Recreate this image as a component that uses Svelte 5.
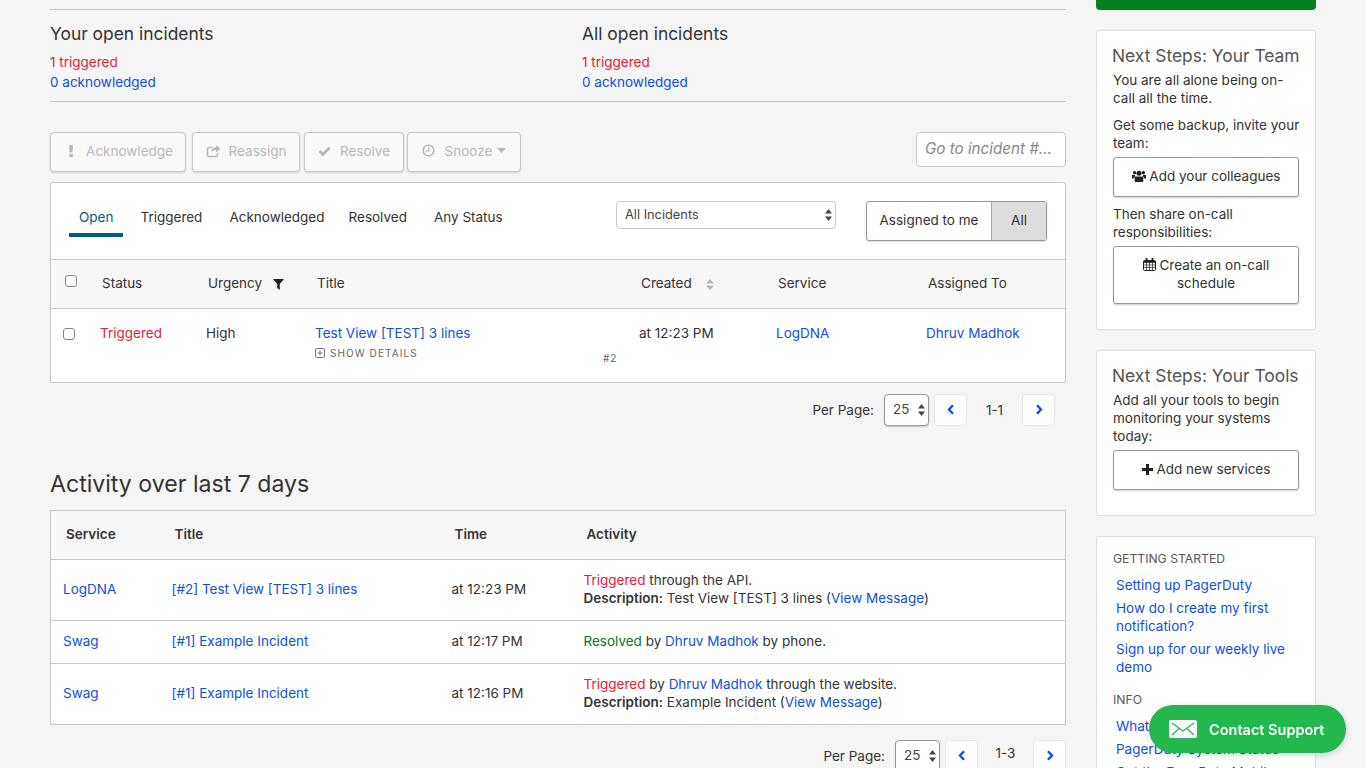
<script>
    const tabs = ["Open", "Triggered", "Acknowledged", "Resolved", "Any Status"];
</script>

<div class="page">
    <main class="content">
        <section class="summary">
            <div class="summary-col">
                <h3>Your open incidents</h3>
                <div class="red">1 triggered</div>
                <div class="blue">0 acknowledged</div>
            </div>
            <div class="summary-col">
                <h3>All open incidents</h3>
                <div class="red">1 triggered</div>
                <div class="blue">0 acknowledged</div>
            </div>
        </section>

        <div class="toolbar">
            <button class="act ack">
                <svg width="8" height="14" viewBox="0 0 8 14"><path d="M2 1h4L5.400 8.500H2.600zM2.200 10h3.600v3H2.200z" fill="currentColor" /></svg>
                <span>Acknowledge</span>
            </button>
            <button class="act re">
                <svg width="15" height="14" viewBox="0 0 15 14"><path d="M10 1l4.500 3.800L10 8.600V6.300C7.500 6.300 5.800 7 4.800 9 4.900 5.600 7 3.500 10 3.300z" fill="currentColor" /><path d="M11.500 9v2.500a1 1 0 0 1-1 1H2.500a1 1 0 0 1-1-1V4.500a1 1 0 0 1 1-1H6" fill="none" stroke="currentColor" stroke-width="1.500" /></svg>
                <span>Reassign</span>
            </button>
            <button class="act res">
                <svg width="13" height="12" viewBox="0 0 13 12"><path d="M1.500 6l3.400 3.400L11.500 2.800" fill="none" stroke="currentColor" stroke-width="2.800" /></svg>
                <span>Resolve</span>
            </button>
            <button class="act sn">
                <svg width="13" height="13" viewBox="0 0 13 13"><circle cx="6.500" cy="6.500" r="5.300" fill="none" stroke="currentColor" stroke-width="1.500" /><path d="M6.800 3.200v3.600H4" fill="none" stroke="currentColor" stroke-width="1.300" /></svg>
                <span>Snooze</span>
                <svg class="caret" width="9" height="5" viewBox="0 0 9 5"><path d="M0 0h9L4.500 5z" fill="currentColor" /></svg>
            </button>
            <input class="goto" type="text" placeholder="Go to incident #..." />
        </div>

        <section class="panel">
            <div class="filters">
                <nav class="tabs">
                    {#each tabs as tab, i}
                        <span class="tab" class:active={i === 0}>{tab}</span>
                    {/each}
                </nav>
                <div class="select-wrap wide">
                    <select class="select"><option>All Incidents</option></select>
                    <svg class="updown" width="7" height="12" viewBox="0 0 7 12"><path d="M3.500 0L7 4.500H0zM3.500 12L0 7.500h7z" fill="#444" /></svg>
                </div>
                <div class="toggle">
                    <span class="toggle-a">Assigned to me</span>
                    <span class="toggle-b">All</span>
                </div>
            </div>
            <table class="incidents">
                <colgroup>
                    <col style="width:36px" /><col style="width:106px" /><col style="width:109px" /><col style="width:288px" />
                    <col style="width:36px" /><col style="width:137px" /><col style="width:150px" /><col />
                </colgroup>
                <thead>
                    <tr>
                        <th class="check-h"><input class="check" type="checkbox" /></th>
                        <th>Status</th>
                        <th>Urgency
                            <svg class="filter" width="11" height="11" viewBox="0 0 11 11"><path d="M0 0h11L6.800 5v6L4.200 9V5z" fill="#222" /></svg>
                        </th>
                        <th colspan="2">Title</th>
                        <th>Created
                            <svg class="sort" width="8" height="11" viewBox="0 0 8 11"><path d="M4 0l4 4.500H0zM4 11L0 6.500h8z" fill="#b5b5b5" /></svg>
                        </th>
                        <th>Service</th>
                        <th>Assigned To</th>
                    </tr>
                </thead>
                <tbody>
                    <tr>
                        <td class="check-c"><input class="check" type="checkbox" /></td>
                        <td class="red">Triggered</td>
                        <td>High</td>
                        <td>
                            <div class="blue">Test View [TEST] 3 lines</div>
                            <div class="details">
                                <svg width="10" height="10" viewBox="0 0 10 10"><rect x="0.500" y="0.500" width="9" height="9" rx="1.500" fill="none" stroke="#777" /><path d="M5 2.500v5M2.500 5h5" stroke="#777" /></svg>
                                SHOW DETAILS
                            </div>
                        </td>
                        <td class="num">#2</td>
                        <td>at 12:23 PM</td>
                        <td class="blue">LogDNA</td>
                        <td class="blue">Dhruv Madhok</td>
                    </tr>
                </tbody>
            </table>
        </section>

        <div class="pager">
            <span class="per">Per Page:</span>
            <div class="select-wrap">
                <select class="select small"><option>25</option></select>
                <svg class="updown" width="7" height="12" viewBox="0 0 7 12"><path d="M3.500 0L7 4.500H0zM3.500 12L0 7.500h7z" fill="#444" /></svg>
            </div>
            <button class="page-btn"><svg width="8" height="11" viewBox="0 0 8 11"><path d="M6 1.200L2 5.500l4 4.300" fill="none" stroke="#0f4fe0" stroke-width="2.400" /></svg></button>
            <span class="range">1-1</span>
            <button class="page-btn"><svg width="8" height="11" viewBox="0 0 8 11"><path d="M2 1.200l4 4.300-4 4.300" fill="none" stroke="#0f4fe0" stroke-width="2.400" /></svg></button>
        </div>

        <h2 class="activity-title">Activity over last 7 days</h2>

        <table class="activity">
            <colgroup>
                <col style="width:109px" /><col style="width:280px" /><col style="width:132px" /><col />
            </colgroup>
            <thead>
                <tr><th>Service</th><th>Title</th><th>Time</th><th>Activity</th></tr>
            </thead>
            <tbody>
                <tr class="tall">
                    <td class="blue">LogDNA</td>
                    <td class="blue">[#2] Test View [TEST] 3 lines</td>
                    <td>at 12:23 PM</td>
                    <td><span class="red">Triggered</span> through the API.<br /><b>Description:</b> Test View [TEST] 3 lines (<span class="blue">View Message</span>)</td>
                </tr>
                <tr class="short">
                    <td class="blue">Swag</td>
                    <td class="blue">[#1] Example Incident</td>
                    <td>at 12:17 PM</td>
                    <td><span class="green">Resolved</span> by <span class="blue">Dhruv Madhok</span> by phone.</td>
                </tr>
                <tr class="tall">
                    <td class="blue">Swag</td>
                    <td class="blue">[#1] Example Incident</td>
                    <td>at 12:16 PM</td>
                    <td><span class="red">Triggered</span> by <span class="blue">Dhruv Madhok</span> through the website.<br /><b>Description:</b> Example Incident (<span class="blue">View Message</span>)</td>
                </tr>
            </tbody>
        </table>

        <div class="pager second">
            <span class="per">Per Page:</span>
            <div class="select-wrap">
                <select class="select small"><option>25</option></select>
                <svg class="updown" width="7" height="12" viewBox="0 0 7 12"><path d="M3.500 0L7 4.500H0zM3.500 12L0 7.500h7z" fill="#444" /></svg>
            </div>
            <button class="page-btn"><svg width="8" height="11" viewBox="0 0 8 11"><path d="M6 1.200L2 5.500l4 4.300" fill="none" stroke="#0f4fe0" stroke-width="2.400" /></svg></button>
            <span class="range">1-3</span>
            <button class="page-btn"><svg width="8" height="11" viewBox="0 0 8 11"><path d="M2 1.200l4 4.300-4 4.300" fill="none" stroke="#0f4fe0" stroke-width="2.400" /></svg></button>
        </div>
    </main>

    <aside class="sidebar">
        <div class="green-btn"></div>

        <div class="card">
            <h4>Next Steps: Your Team</h4>
            <p>You are all alone being on-call all the time.</p>
            <p class="gap">Get some backup, invite your team:</p>
            <button class="side-btn">
                <svg width="14" height="12" viewBox="0 0 14 12"><circle cx="7" cy="3.200" r="2.500" fill="#222" /><circle cx="2.600" cy="2.700" r="1.700" fill="#222" /><circle cx="11.400" cy="2.700" r="1.700" fill="#222" /><path d="M3.500 6.500h7l.8 1V11a1 1 0 0 1-1 1H3.700a1 1 0 0 1-1-1V7.500zM0 5h2.800l.4 1-1.500 2.500H0zM14 5h-2.800l-.4 1 1.500 2.500H14z" fill="#222" /></svg>
                Add your colleagues
            </button>
            <p class="gap2">Then share on-call responsibilities:</p>
            <button class="side-btn">
                <svg width="13" height="13" viewBox="0 0 13 13"><path d="M1.500 2.500h10a1 1 0 0 1 1 1v8a1 1 0 0 1-1 1h-10a1 1 0 0 1-1-1v-8a1 1 0 0 1 1-1z" fill="none" stroke="#222" /><path d="M.5 4.500h12M.5 7h12M.5 9.500h12M3.500 4.500v8M6.500 4.500v8M9.500 4.500v8" stroke="#222" stroke-width="0.700" /><path d="M3.500 0v3M9.500 0v3" stroke="#222" stroke-width="1.800" /><path d="M.5 3h12v1.500H.5z" fill="#222" /></svg>
                Create an on-call schedule
            </button>
        </div>

        <div class="card tools">
            <h4>Next Steps: Your Tools</h4>
            <p>Add all your tools to begin monitoring your systems today:</p>
            <button class="side-btn">
                <svg width="11" height="11" viewBox="0 0 11 11"><path d="M5.500 0v11M0 5.500h11" stroke="#222" stroke-width="3" /></svg>
                Add new services
            </button>
        </div>

        <div class="card help">
            <h5>GETTING STARTED</h5>
            <div class="link">Setting up PagerDuty</div>
            <div class="link">How do I create my first notification?</div>
            <div class="link">Sign up for our weekly live demo</div>
            <h5 class="info">INFO</h5>
            <div class="link">What's New</div>
            <div class="link">PagerDuty System Status</div>
            <div class="link">Get the Free Data Mobile</div>
        </div>
    </aside>
</div>

<button class="contact">
    <svg width="28" height="18" viewBox="0 0 28 18"><rect width="28" height="18" rx="2" fill="#fff" /><path d="M3 3l11 8 11-8M3 15l7-6.500M25 15l-7-6.500" fill="none" stroke="#22b84d" stroke-width="1.200" /></svg>
    Contact Support
</button>

<style>
    :global(html), :global(body) {
        margin: 0;
        height: 768px;
        overflow: hidden;
        background: #f5f5f5;
    }

    .page {
        display: flex;
        align-items: flex-start;
        height: 768px;
        overflow: hidden;
        padding-left: 50px;
        gap: 30px;
        font-family: Inter, "Liberation Sans", sans-serif;
        font-size: 13.5px;
        line-height: 18px;
        color: #333;
    }

    .content {
        width: 1016px;
        flex: none;
        padding-top: 9px;
    }

    .summary {
        display: flex;
        height: 91px;
        border-top: 1px solid #c8c8c8;
        border-bottom: 1px solid #c8c8c8;
    }

    .summary-col {
        width: 532px;
        flex: none;
        line-height: 20px;
    }

    h3 {
        margin: 12px 0 6px;
        font-size: 17.4px;
        line-height: 24px;
        font-weight: 400;
    }

    .red { color: #e3213a; }
    .blue { color: #0f4fe0; }
    .green { color: #05761f; }

    .toolbar {
        display: flex;
        gap: 6px;
        margin-top: 30px;
        height: 40px;
    }

    .act {
        display: flex;
        align-items: center;
        justify-content: center;
        gap: 9px;
        height: 40px;
        padding: 0 0 3px;
        background: #f9f9f9;
        border: 1px solid #c8c8c8;
        border-radius: 4px;
        box-shadow: 0 1px 2px rgba(0, 0, 0, 0.15);
        font: inherit;
        color: #b8b8b8;
    }

    .ack { width: 136px; gap: 11px; padding-left: 4px; }
    .re { width: 108px; gap: 8px; }
    .res { width: 100px; margin-left: -2px; }
    .sn { width: 114px; margin-left: -3px; gap: 10px; }
    .caret { margin-left: -5px; }

    .goto {
        width: 150px;
        height: 35px;
        box-sizing: border-box;
        margin-left: auto;
        padding: 0 8px 3px;
        border: 1px solid #c8c8c8;
        border-radius: 4px;
        background: #fff;
        font: italic 15.2px Inter, "Liberation Sans", sans-serif;
    }

    .goto::placeholder { color: #888; opacity: 1; }

    .panel {
        margin-top: 10px;
        background: #fff;
        border: 1px solid #c8c8c8;
        border-radius: 3px 3px 0 0;
    }

    .filters {
        display: flex;
        height: 76px;
        position: relative;
        border-bottom: 1px solid #c8c8c8;
    }

    .tabs {
        display: flex;
        padding: 15px 0 0 18px;
        width: 565px;
        flex: none;
        box-sizing: border-box;
    }

    .tab {
        padding: 10px 10px 0;
        margin-right: 7px;
        height: 26px;
    }

    .tab:nth-child(3) { margin-right: 4px; }

    .tab.active {
        color: #005c85;
        border-bottom: 4px solid #005c85;
        height: 25px;
    }

    .select-wrap {
        position: relative;
        display: inline-block;
    }

    .select-wrap.wide {
        margin-top: 18px;
        height: 27px;
    }

    .select {
        appearance: none;
        display: block;
        width: 220px;
        height: 28px;
        padding: 0 8px 2px;
        background: #fff;
        border: 1px solid #c8c8c8;
        border-radius: 4px;
        font: 12.8px Inter, "Liberation Sans", sans-serif;
        color: #444;
    }

    .select.small {
        width: 45px;
        height: 32px;
        border-color: #999;
        box-shadow: 0 1px 2px rgba(0, 0, 0, 0.2);
        font-size: 13.5px;
    }

    .updown {
        position: absolute;
        right: 4px;
        top: 8px;
        pointer-events: none;
    }

    .toggle {
        display: flex;
        height: 40px;
        margin: 18px 0 0 30px;
        box-sizing: border-box;
        border: 1px solid #999;
        border-radius: 3px;
        box-shadow: 0 1px 2px rgba(0, 0, 0, 0.15);
        line-height: 37px;
    }

    .toggle-a { width: 124px; text-align: center; }
    .toggle-b { width: 54px; text-align: center; background: #ddd; border-left: 1px solid #aaa; }

    table {
        width: 100%;
        table-layout: fixed;
        border-collapse: collapse;
    }

    th {
        text-align: left;
        font-weight: 400;
        padding: 0 0 2px 15px;
    }

    .incidents thead tr {
        height: 48px;
        background: #f7f7f7;
        border-bottom: 1px solid #c8c8c8;
    }

    .incidents td {
        height: 74px;
        padding: 15px 0 0 13px;
        vertical-align: top;
        box-sizing: border-box;
    }

    .check {
        appearance: none;
        display: block;
        width: 12px;
        height: 12px;
        margin: 0;
        background: #fff;
        border: 1px solid #888;
        border-radius: 3px;
    }

    .incidents .check-h { padding-left: 14px; padding-bottom: 6px; }
    .incidents .check-c { padding: 19px 0 0 12px; }

    .filter { margin-left: 7px; vertical-align: -2px; }
    .sort { margin-left: 10px; vertical-align: -2px; }

    .details {
        margin-top: 4px;
        font-size: 10px;
        line-height: 14px;
        letter-spacing: 1.100px;
        color: #666;
    }

    .details svg { vertical-align: -1px; margin-right: 1px; }

    .incidents td.num {
        padding-top: 40px;
        font-size: 10px;
        letter-spacing: 1px;
        color: #666;
    }

    .pager {
        display: flex;
        align-items: center;
        justify-content: flex-end;
        margin-top: 10px;
        height: 33px;
        padding-right: 11px;
    }

    .pager .select-wrap { margin-left: 10px; height: 32px; }

    .pager .updown { top: 10px; }

    .page-btn {
        display: flex;
        align-items: center;
        justify-content: center;
        width: 33px;
        height: 32px;
        margin-left: 5px;
        padding: 0;
        background: #fff;
        border: 1px solid #e4e4e4;
        border-radius: 4px;
    }

    .range {
        width: 55px;
        margin-right: -5px;
        text-align: center;
    }

    .second .range { padding-bottom: 5px; }

    .activity-title {
        margin: 43px 0 11px;
        font-size: 23.1px;
        line-height: 30px;
        font-weight: 400;
    }

    .activity {
        background: #fff;
        border: 1px solid #c8c8c8;
    }

    .activity th {
        height: 49px;
        box-sizing: border-box;
        background: #f7f7f7;
        font-weight: 600;
        border-bottom: 1px solid #c8c8c8;
    }

    .activity td {
        box-sizing: border-box;
        padding: 0 0 2px 12px;
        border-top: 1px solid #c8c8c8;
    }

    .activity tbody tr:first-child td { border-top: 0; }
    .tall td { height: 61px; }
    .short td { height: 43px; }
    .activity b { font-weight: 600; }

    .pager.second {
        margin-top: 14px;
        padding-right: 0;
    }

    .sidebar {
        width: 220px;
        flex: none;
    }

    .green-btn {
        height: 10px;
        background: #048020;
        border-radius: 0 0 4px 4px;
    }

    .card {
        box-sizing: border-box;
        height: 300px;
        margin-top: 20px;
        padding: 14px 16px 0;
        background: #fff;
        border: 1px solid #ddd;
        border-radius: 3px;
    }

    .card.tools { height: 166px; }
    .card.help { height: 400px; padding-top: 14px; }

    h4 {
        margin: 0 -8px 4px -1px;
        font-size: 17.4px;
        line-height: 22px;
        font-weight: 400;
        color: #555;
    }

    p { margin: 0 -6px 0 0; }
    p.gap { margin-top: 9px; margin-bottom: 5px; }
    p.gap2 { margin-top: 8px; margin-bottom: 5px; }

    .side-btn {
        display: block;
        width: 100%;
        padding: 9px 8px 11px;
        background: #fff;
        border: 1px solid #999;
        border-radius: 3px;
        box-shadow: 0 1px 2px rgba(0, 0, 0, 0.2);
        font: inherit;
        color: #333;
    }

    .tools .side-btn { margin-top: 5px; }

    .side-btn svg { vertical-align: -1px; }

    h5 {
        margin: 0 0 9px;
        font-size: 12.2px;
        line-height: 16px;
        font-weight: 400;
        color: #555;
    }

    h5.info { margin-top: 16px; }

    .link {
        margin: 0 0 5px 3px;
        color: #0f4fe0;
    }

    .contact {
        position: fixed;
        left: 1149px;
        top: 705px;
        display: flex;
        align-items: center;
        gap: 12px;
        width: 197px;
        height: 48px;
        padding: 0 0 0 20px;
        box-sizing: border-box;
        background: #22b84d;
        border: 0;
        border-radius: 24px;
        box-shadow: 0 2px 6px rgba(0, 0, 0, 0.15);
        font: 600 14.500px Inter, "Liberation Sans", sans-serif;
        color: #fff;
    }
</style>
